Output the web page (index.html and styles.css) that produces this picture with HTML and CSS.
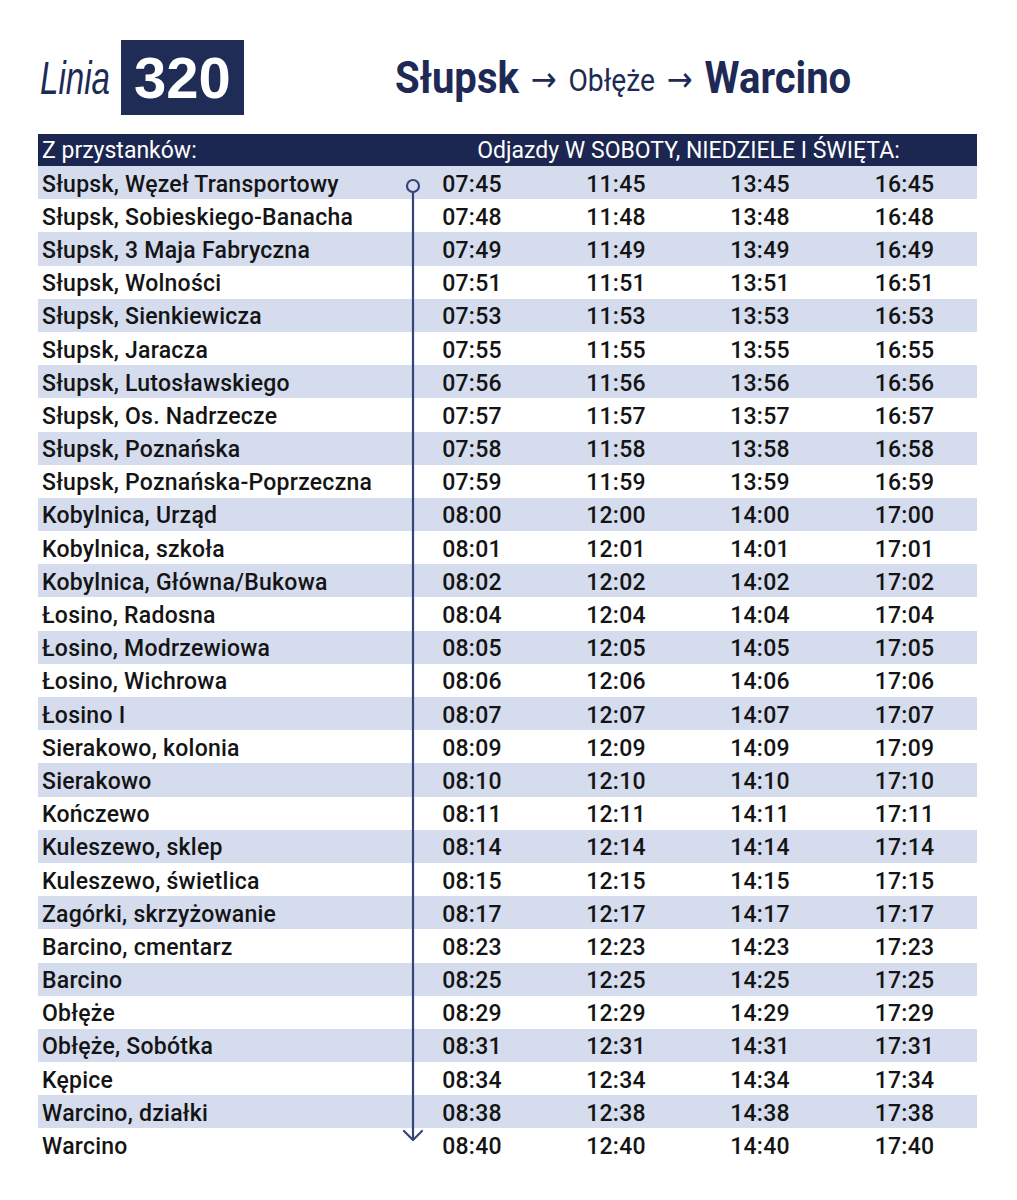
FILE: index.html
```html
<!DOCTYPE html>
<html lang="pl">
<head>
<meta charset="utf-8">
<title>Linia 320</title>
<link rel="stylesheet" href="styles.css">
</head>
<body>
<div class="page">
  <header class="top">
    <span class="linia">Linia</span>
    <span class="num">320</span>
    <h1 class="route"><b>Słupsk</b><span class="arr">→</span><span class="via">Obłęże</span><span class="arr">→</span><b>Warcino</b></h1>
  </header>
  <section class="table">
    <div class="head">
      <div class="hname">Z przystanków:</div>
      <div class="htimes">Odjazdy W SOBOTY, NIEDZIELE I ŚWIĘTA:</div>
    </div>
    <div class="body">
      <div class="rows">
        <div class="row"><span class="name">Słupsk, Węzeł Transportowy</span><span>07:45</span><span>11:45</span><span>13:45</span><span>16:45</span></div>
        <div class="row"><span class="name">Słupsk, Sobieskiego-Banacha</span><span>07:48</span><span>11:48</span><span>13:48</span><span>16:48</span></div>
        <div class="row"><span class="name">Słupsk, 3 Maja Fabryczna</span><span>07:49</span><span>11:49</span><span>13:49</span><span>16:49</span></div>
        <div class="row"><span class="name">Słupsk, Wolności</span><span>07:51</span><span>11:51</span><span>13:51</span><span>16:51</span></div>
        <div class="row"><span class="name">Słupsk, Sienkiewicza</span><span>07:53</span><span>11:53</span><span>13:53</span><span>16:53</span></div>
        <div class="row"><span class="name">Słupsk, Jaracza</span><span>07:55</span><span>11:55</span><span>13:55</span><span>16:55</span></div>
        <div class="row"><span class="name">Słupsk, Lutosławskiego</span><span>07:56</span><span>11:56</span><span>13:56</span><span>16:56</span></div>
        <div class="row"><span class="name">Słupsk, Os. Nadrzecze</span><span>07:57</span><span>11:57</span><span>13:57</span><span>16:57</span></div>
        <div class="row"><span class="name">Słupsk, Poznańska</span><span>07:58</span><span>11:58</span><span>13:58</span><span>16:58</span></div>
        <div class="row"><span class="name">Słupsk, Poznańska-Poprzeczna</span><span>07:59</span><span>11:59</span><span>13:59</span><span>16:59</span></div>
        <div class="row"><span class="name">Kobylnica, Urząd</span><span>08:00</span><span>12:00</span><span>14:00</span><span>17:00</span></div>
        <div class="row"><span class="name">Kobylnica, szkoła</span><span>08:01</span><span>12:01</span><span>14:01</span><span>17:01</span></div>
        <div class="row"><span class="name">Kobylnica, Główna/Bukowa</span><span>08:02</span><span>12:02</span><span>14:02</span><span>17:02</span></div>
        <div class="row"><span class="name">Łosino, Radosna</span><span>08:04</span><span>12:04</span><span>14:04</span><span>17:04</span></div>
        <div class="row"><span class="name">Łosino, Modrzewiowa</span><span>08:05</span><span>12:05</span><span>14:05</span><span>17:05</span></div>
        <div class="row"><span class="name">Łosino, Wichrowa</span><span>08:06</span><span>12:06</span><span>14:06</span><span>17:06</span></div>
        <div class="row"><span class="name">Łosino I</span><span>08:07</span><span>12:07</span><span>14:07</span><span>17:07</span></div>
        <div class="row"><span class="name">Sierakowo, kolonia</span><span>08:09</span><span>12:09</span><span>14:09</span><span>17:09</span></div>
        <div class="row"><span class="name">Sierakowo</span><span>08:10</span><span>12:10</span><span>14:10</span><span>17:10</span></div>
        <div class="row"><span class="name">Kończewo</span><span>08:11</span><span>12:11</span><span>14:11</span><span>17:11</span></div>
        <div class="row"><span class="name">Kuleszewo, sklep</span><span>08:14</span><span>12:14</span><span>14:14</span><span>17:14</span></div>
        <div class="row"><span class="name">Kuleszewo, świetlica</span><span>08:15</span><span>12:15</span><span>14:15</span><span>17:15</span></div>
        <div class="row"><span class="name">Zagórki, skrzyżowanie</span><span>08:17</span><span>12:17</span><span>14:17</span><span>17:17</span></div>
        <div class="row"><span class="name">Barcino, cmentarz</span><span>08:23</span><span>12:23</span><span>14:23</span><span>17:23</span></div>
        <div class="row"><span class="name">Barcino</span><span>08:25</span><span>12:25</span><span>14:25</span><span>17:25</span></div>
        <div class="row"><span class="name">Obłęże</span><span>08:29</span><span>12:29</span><span>14:29</span><span>17:29</span></div>
        <div class="row"><span class="name">Obłęże, Sobótka</span><span>08:31</span><span>12:31</span><span>14:31</span><span>17:31</span></div>
        <div class="row"><span class="name">Kępice</span><span>08:34</span><span>12:34</span><span>14:34</span><span>17:34</span></div>
        <div class="row"><span class="name">Warcino, działki</span><span>08:38</span><span>12:38</span><span>14:38</span><span>17:38</span></div>
        <div class="row"><span class="name">Warcino</span><span>08:40</span><span>12:40</span><span>14:40</span><span>17:40</span></div>
      </div>
      <svg class="track" viewBox="0 0 939 996" width="939" height="996" aria-hidden="true">
        <circle cx="375" cy="20" r="6" fill="none" stroke="#34457a" stroke-width="2.2"/>
        <line x1="375" y1="26" x2="375" y2="974" stroke="#34457a" stroke-width="2.2"/>
        <polyline points="366,965 375,974 384,965" fill="none" stroke="#34457a" stroke-width="2.2" stroke-linejoin="round" stroke-linecap="round"/>
      </svg>
    </div>
  </section>
</div>
</body>
</html>
```
FILE: styles.css
```css
html, body {
  margin: 0;
  padding: 0;
  background: #ffffff;
}
.page {
  padding: 40px 40px 0 38px;
  font-family: "Roboto", "Liberation Sans", sans-serif;
  color: #141414;
}
.top {
  display: flex;
  align-items: center;
  height: 75px;
}
.linia {
  display: inline-block;
  width: 71px;
  margin-left: 2px;
  margin-right: 10px;
  font-family: "Liberation Sans", sans-serif;
  font-style: italic;
  font-size: 46px;
  color: #1e2a55;
  white-space: nowrap;
  transform: scaleX(0.72);
  transform-origin: left center;
}
.num {
  display: flex;
  align-items: center;
  justify-content: center;
  width: 123px;
  height: 75px;
  background: #1f2c56;
  color: #ffffff;
  font-family: "Liberation Sans", sans-serif;
  font-weight: bold;
  font-size: 58px;
}
.route {
  display: flex;
  align-items: center;
  gap: 13px;
  margin: 0 0 0 151px;
  font-family: "Roboto", "Liberation Sans", sans-serif;
  font-weight: normal;
  color: #1e2a55;
  font-size: 44px;
  white-space: nowrap;
  transform: scaleX(0.91);
  transform-origin: left center;
}
.route b {
  font-weight: bold;
}
.route .via {
  font-size: 31px;
  padding-top: 6px;
}
.route .arr {
  font-family: "DejaVu Sans", sans-serif;
  font-size: 34px;
  padding-top: 2px;
}
.table {
  margin-top: 19px;
  width: 939px;
}
.head {
  display: grid;
  grid-template-columns: 362px 1fr;
  height: 32px;
  align-items: center;
  background: #1b2651;
  color: #ffffff;
  font-size: 23px;
  padding-top: 1px;
  box-sizing: border-box;
}
.hname {
  padding-left: 4px;
}
.htimes {
  text-align: center;
}
.body {
  position: relative;
}
.rows {
  display: flex;
  flex-direction: column;
}
.row {
  display: grid;
  grid-template-columns: 362px 144px 144px 144px 145px;
  height: 33.2px;
  box-sizing: border-box;
  padding-top: 3px;
  align-items: center;
  font-size: 23px;
  font-weight: 500;
  text-align: center;
  letter-spacing: 0.25px;
}
.row:nth-child(odd) {
  background: #d5dcee;
}
.row .name {
  text-align: left;
  padding-left: 4px;
}
.track {
  position: absolute;
  left: 0;
  top: 0;
}
```
